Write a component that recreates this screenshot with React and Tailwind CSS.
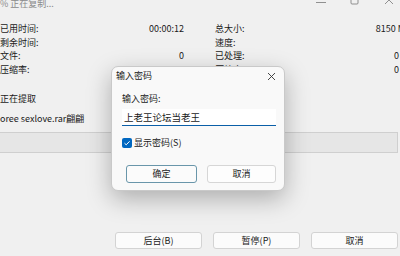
import React from 'react';

const font = { fontFamily: '"Noto Sans CJK SC", "Noto Sans", sans-serif' };

function Row({ label, value }) {
  return (
    <div className="flex justify-between h-[13.5px] leading-[13.5px] whitespace-nowrap">
      <span>{label}</span>
      <span>{value}</span>
    </div>
  );
}

export default function App() {
  return (
    <div className="relative w-[400px] h-[256px] overflow-hidden bg-[#f0f0f0] text-[9px] text-[#1a1a1a]" style={font}>
      {/* title bar */}
      <div className="flex justify-between items-start h-[22px]">
        <span className="-mt-[2px] text-[9px] leading-[12px] text-[#8a8a8a]">% 正在复制...</span>
        <div className="flex items-start gap-[24px] pr-[6px] -mt-[2px]">
          <svg width="10" height="8" viewBox="0 0 10 8"><path d="M0 4.5h10" stroke="#777" strokeWidth="0.8" /></svg>
          <svg width="10" height="8" viewBox="0 0 10 8"><rect x="1" y="-2" width="7" height="8" fill="none" stroke="#777" strokeWidth="0.8" rx="1" /></svg>
          <svg width="10" height="8" viewBox="0 0 10 8"><path d="M1 -2L9 6M9 -2L1 6" stroke="#777" strokeWidth="0.8" /></svg>
        </div>
      </div>

      {/* stats */}
      <div className="flex">
        <div className="w-[184px]">
          <Row label="已用时间:" value="00:00:12" />
          <Row label="剩余时间:" value="" />
          <Row label="文件:" value="0" />
          <Row label="压缩率:" value="" />
        </div>
        <div className="ml-[31px] flex-1 pr-[1px]">
          <Row label="总大小:" value={<span className="-mr-[6px]">8150 M</span>} />
          <Row label="速度:" value="" />
          <Row label="已处理:" value="0" />
          <Row label="压缩率:" value="0" />
        </div>
      </div>

      <div className="mt-[16px] leading-[14px]">正在提取</div>
      <div className="mt-[6px] leading-[14px]">oree sexlove.rar翩翩</div>

      {/* progress */}
      <div className="mt-[6px] mr-[2px] h-[21px] border-y border-r border-[#cfcfcf] bg-[#e6e6e6]" />

      {/* bottom buttons */}
      <div className="absolute left-0 right-0 top-[232px] flex justify-end gap-[11px] pr-[2px]">
        {['后台(B)', '暂停(P)', '取消'].map(t => (
          <div key={t} className="w-[87px] h-[17px] flex items-center justify-center rounded-[3px] border border-[#d3d3d3] bg-[#fbfbfb]">{t}</div>
        ))}
      </div>

      {/* dialog */}
      <div className="absolute left-[111px] top-[66px] w-[174px] h-[125px] rounded-[7px] border border-[#c9c9c9] bg-[#f9f9f9] shadow-[0_8px_24px_rgba(0,0,0,0.28)]">
        <div className="flex justify-between items-center h-[18px] pl-[4px] pr-[8px]">
          <span>输入密码</span>
          <svg width="9" height="9" viewBox="0 0 9 9"><path d="M1 1L8 8M8 1L1 8" stroke="#333" strokeWidth="0.9" /></svg>
        </div>
        <div className="pl-[10px] pr-[8px]">
          <div className="mt-[8px] leading-[12px]">输入密码:</div>
          <div className="mt-[4px] h-[17px] bg-white border-b-[1.5px] border-[#0b5fa8] flex items-center pl-[2px] text-[9.5px]">上老王论坛当老王</div>
          <div className="mt-[10px] flex items-center gap-[2px]">
            <div className="w-[10px] h-[10px] rounded-[2px] bg-[#0067c0] flex items-center justify-center">
              <svg width="8" height="8" viewBox="0 0 8 8"><path d="M1.5 4.2L3.2 5.8L6.6 2.3" fill="none" stroke="white" strokeWidth="1" /></svg>
            </div>
            <span>显示密码(S)</span>
          </div>
          <div className="mt-[15px] flex gap-[10px] pl-[4px]">
            <div className="w-[71px] h-[18px] flex items-center justify-center rounded-[3px] border-[1.5px] border-[#6996aa] bg-[#fbfbfb]">确定</div>
            <div className="w-[69px] h-[18px] flex items-center justify-center rounded-[3px] border border-[#d6d6d6] bg-[#fdfdfd]">取消</div>
          </div>
        </div>
      </div>
    </div>
  );
}
